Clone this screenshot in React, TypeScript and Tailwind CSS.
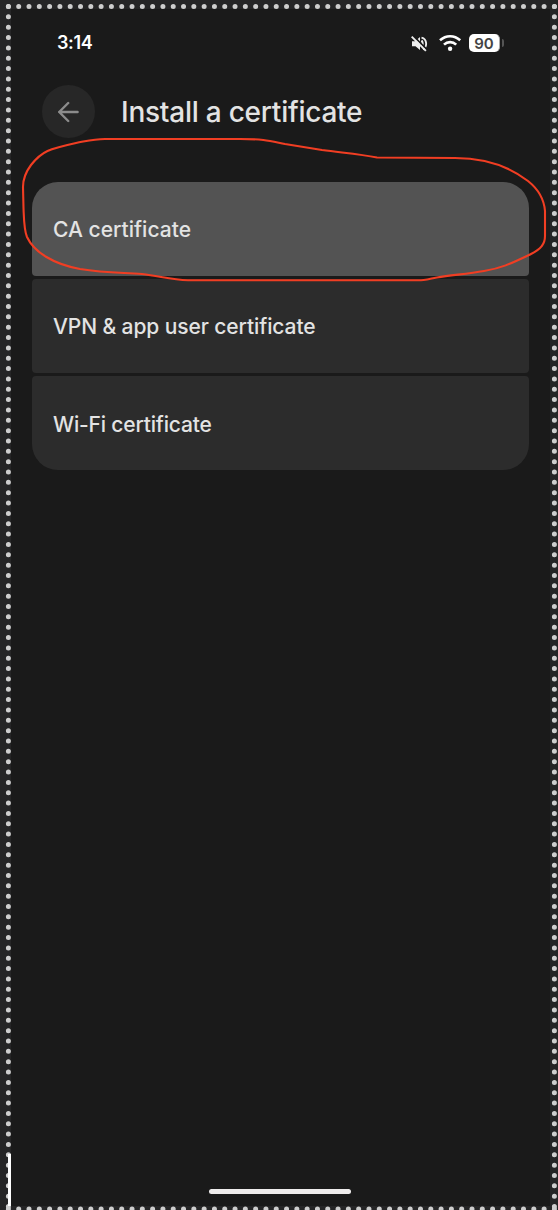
const dot = "stroke-[#cecece]";

function DottedFrame() {
  return (
    <svg className="pointer-events-none absolute inset-0" width="558" height="1210" fill="none" strokeWidth="5" strokeLinecap="round">
      <path className={dot} d="M8.4 6.5H556" strokeDasharray="0 10.302" />
      <path className={dot} d="M8.4 6.5V1208" strokeDasharray="0 10.345" />
      <path className={dot} d="M554.4 6.5V1208" strokeDasharray="0 10.345" />
      <path className={dot} d="M8.4 1209H556" strokeDasharray="0 10.302" />
      <path d="M9.5 1154V1206" stroke="#fff" strokeWidth="3" strokeLinecap="butt" />
    </svg>
  );
}

function StatusBar() {
  return (
    <div className="flex h-[24px] items-center pl-[46px] pr-[46px]">
      <span className="text-[18px] font-semibold leading-6 tracking-[-0.35px] text-white">3:14</span>
      <svg className="ml-auto" width="18" height="18" viewBox="0 0 18 18" fill="none">
        <path d="M1 7.2H4.2L9 3V16L4.5 12.2H1Z" fill="#eee" />
        <path d="M10.6 6.4Q12.8 9.5 10.6 12.6M10.5 3.6C16.4 5 16.4 13 12 15.3" stroke="#eee" strokeWidth="1.9" />
        <path d="M1.8 1.5L16 15.7" stroke="#1a1a1a" strokeWidth="1.8" />
        <path d="M.7 2.6L14.9 16.8" stroke="#eee" strokeWidth="1.9" />
      </svg>
      <svg className="ml-[10px]" width="23" height="18" viewBox="0 0 23 18" fill="none" stroke="#fff" strokeWidth="2.6">
        <path d="M1 6.3C7 .8 15.2 .8 21.2 6.3M5 10.7C8.5 7.2 13.7 7.2 17.2 10.7" />
        <circle cx="11.1" cy="14.7" r="2.2" fill="#fff" stroke="none" />
      </svg>
      <div className="ml-[7px] flex items-center">
        <div className="flex h-[18px] w-[31px] items-center justify-center rounded-[5px] border-r border-[#aaa] bg-white text-[15px] font-semibold leading-none tracking-[-0.1px] text-[#444]">90</div>
        <div className="ml-[2px] h-[8px] w-[2px] rounded-r-sm bg-[#555]" />
      </div>
    </div>
  );
}

export default function App() {
  return (
    <div className="relative h-[1210px] w-[558px] overflow-hidden bg-[#252526] pl-[11px] pr-[8px] pt-[9px] pb-[4px] font-['Inter',sans-serif] text-[#e3e3e3]">
      <main className="flex h-full flex-col bg-[#1a1a1a] pt-[22px]">
        <StatusBar />
        <header className="mt-[30px] flex items-center pl-[31px]">
          <button aria-label="Back" className="flex size-[53px] items-center justify-center rounded-full bg-[#272727]">
            <svg width="22" height="22" viewBox="0 0 22 22" fill="none" stroke="#8c8c8c" strokeWidth="2.4" strokeLinecap="round" strokeLinejoin="round">
              <path d="M19.6 11H1.2M10.2 2L1.2 11L10.2 20" />
            </svg>
          </button>
          <h1 className="ml-[26px] text-[28px] font-medium leading-9 tracking-[-0.24px]">Install a certificate</h1>
        </header>
        <div className="mt-[44px] ml-[21px] flex w-[496.5px] flex-col gap-[3px] text-[21px] font-medium">
          <div className="flex h-[94px] items-center rounded-[4px] rounded-t-[26px] bg-[#535353] pl-[21px] pt-[2px] tracking-[0.03px]">CA certificate</div>
          <div className="flex h-[94px] items-center rounded-[4px] bg-[#2c2c2c] pl-[21px] pt-[2px] tracking-[-0.09px]">VPN &amp; app user certificate</div>
          <div className="flex h-[94px] items-center rounded-[4px] rounded-b-[26px] bg-[#2c2c2c] pl-[21px] pt-[4px] tracking-[-0.17px]">Wi-Fi certificate</div>
        </div>
        <div className="mt-auto mb-[12px] ml-[198px] h-[5px] w-[142px] rounded-full bg-[#eeecec]" />
      </main>
      <DottedFrame />
      <svg className="pointer-events-none absolute inset-0" width="558" height="1210" fill="none" stroke="#f13e23" strokeWidth="2.1" strokeLinejoin="round">
        <path d="M105 139H240C265 139 270 141 285 144L322 150C345 153 360 154 377 157.5L455 158C480 158 506 164 528 181C538 189 544 198 545 211V236C545 244 541 249 531 254C510 264 502 268 484 271C467 274 452 275 437 277.5C430 279 425 280 421 280.2H188C171 280 160 276 142 274C120 272.5 105 273 80 269C53 264 34 252 27 237C24 230 24 220 23.5 208L23 187C23 180 25 173 31 165C42 151 49 149 76 143C87 141 93 139 105 139Z" />
      </svg>
    </div>
  );
}
